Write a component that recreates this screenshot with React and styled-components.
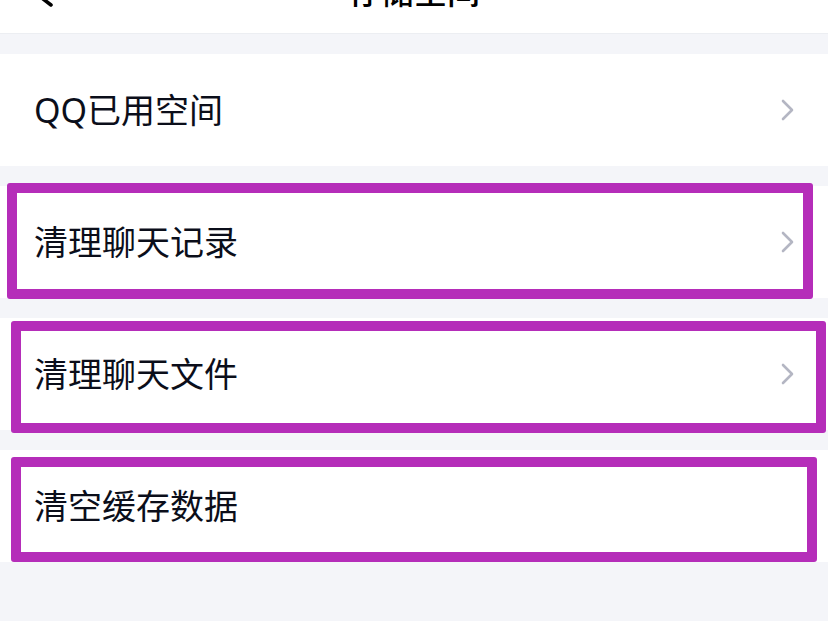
import React from "react";
import styled, { createGlobalStyle } from "styled-components";

const GlobalStyle = createGlobalStyle`
  html, body {
    margin: 0;
    padding: 0;
    background: #f4f5f9;
  }
  body {
    font-family: "Noto Sans", "Noto Sans CJK SC", sans-serif;
    -webkit-font-smoothing: antialiased;
  }
`;

const items = [
  { label: "QQ已用空间", arrow: true },
  { label: "清理聊天记录", arrow: true },
  { label: "清理聊天文件", arrow: true },
  { label: "清空缓存数据", arrow: false },
];

// purple highlight frames drawn over the list
const marks = [
  { left: 7, top: 183, width: 806, height: 116 },
  { left: 11, top: 321, width: 815, height: 112 },
  { left: 11, top: 457, width: 806, height: 105 },
];

const App = () => {
  return (
    <Page>
      <GlobalStyle />
      <NavBar>
        <BackSlot>
          <svg width="24" height="40" viewBox="0 0 24 40">
            <polyline
              points="21,9 4,22 21,35"
              fill="none"
              stroke="#000"
              strokeWidth="3.6"
              strokeLinecap="round"
              strokeLinejoin="round"
            />
          </svg>
        </BackSlot>
        <Title>存储空间</Title>
        <span />
      </NavBar>
      <List>
        {items.map((item) => (
          <Row key={item.label}>
            <Label>{item.label}</Label>
            {item.arrow && (
              <svg width="13" height="22" viewBox="0 0 13 22">
                <polyline
                  points="2,2 11,11 2,20"
                  fill="none"
                  stroke="#b4b6c3"
                  strokeWidth="2.6"
                  strokeLinecap="round"
                  strokeLinejoin="round"
                />
              </svg>
            )}
          </Row>
        ))}
      </List>
      {marks.map((m, i) => (
        <Mark
          key={i}
          style={{ left: m.left, top: m.top, width: m.width, height: m.height }}
        />
      ))}
    </Page>
  );
};

export default App;

const Page = styled.div`
  position: relative;
  width: 828px;
  height: 621px;
  overflow: hidden;
  background: #f4f5f9;
`;

const NavBar = styled.div`
  display: grid;
  grid-template-columns: 1fr auto 1fr;
  align-items: start;
  height: 34px;
  background: #ffffff;
  border-bottom: 1px solid #eceef2;
  box-sizing: border-box;
  overflow: hidden;
`;

const BackSlot = styled.div`
  display: flex;
  padding-left: 30px;
  margin-top: -30px;
  height: 40px;
`;

const Title = styled.div`
  font-family: "Noto Sans CJK SC", sans-serif;
  font-size: 33px;
  font-weight: 500;
  line-height: 34px;
  color: #000;
  margin-top: -27px;
  white-space: nowrap;
`;

const List = styled.div`
  display: flex;
  flex-direction: column;
  gap: 20px;
  padding-top: 20px;
`;

const Row = styled.div`
  display: flex;
  align-items: center;
  justify-content: space-between;
  height: 112px;
  padding: 0 34px;
  background: #ffffff;
`;

const Label = styled.span`
  font-family: "Noto Sans", "Noto Sans CJK SC", sans-serif;
  font-size: 34px;
  line-height: 40px;
  color: #0b0e1a;
`;

const Mark = styled.div`
  position: absolute;
  box-sizing: border-box;
  border: 10px solid #b52db9;
  border-radius: 3px;
  pointer-events: none;
`;
